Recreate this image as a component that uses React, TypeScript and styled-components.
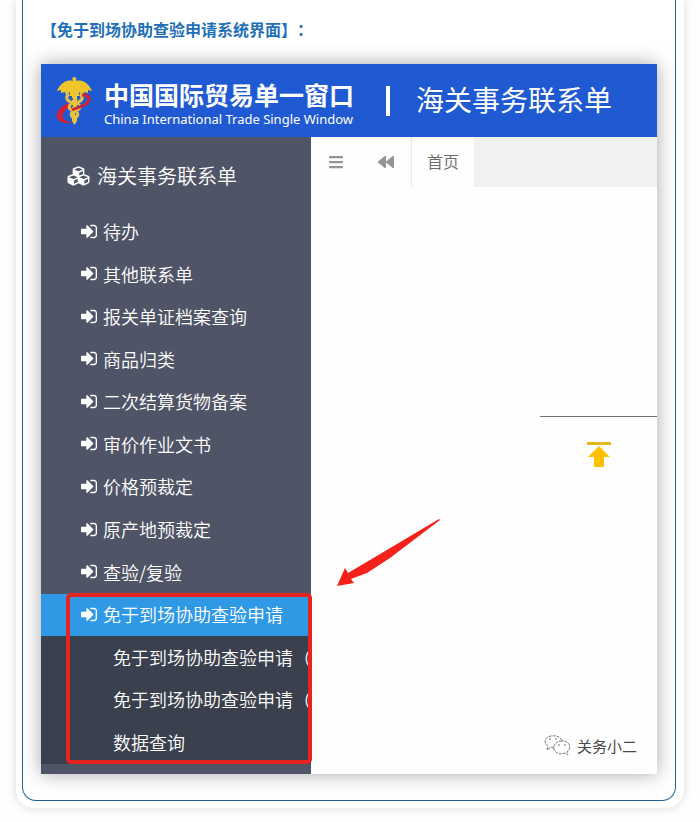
import React from "react";
import styled, { createGlobalStyle } from "styled-components";
import { FaBackward, FaBars, FaCubes } from "react-icons/fa";

const GlobalStyle = createGlobalStyle`
  *, *::before, *::after { box-sizing: border-box; }
  body {
    margin: 0;
    background: #fefefe;
    font-family: "Noto Sans", "Noto Sans CJK SC", sans-serif;
  }
  button { font: inherit; color: inherit; border: 0; background: none; padding: 0; cursor: pointer; }
  ul { list-style: none; margin: 0; padding: 0; }
  h1, h2, p { margin: 0; font-weight: 400; }
`;

const Page = styled.div`
  padding: 0 16px 14px;
  overflow: hidden;
`;

const Card = styled.article`
  padding: 0 8px 7px 6px;
  background: #fff;
  border-radius: 0 0 18px 18px;
  box-shadow: 0 0 10px rgba(0, 0, 0, 0.15);
`;

const Frame = styled.div`
  padding: 15px 18px 26px;
  border: 1px solid #1f6199;
  border-top: 0;
  border-radius: 0 0 14px 14px;
`;

const Caption = styled.h2`
  margin-bottom: 21px;
  font-family: "Noto Sans CJK SC", sans-serif;
  font-size: 16px;
  line-height: 28px;
  font-weight: 700;
  color: #1f70b8;
  text-spacing-trim: space-all;
`;

const Shot = styled.section`
  position: relative;
  background: #fefefe;
  box-shadow: 0 0 18px rgba(0, 0, 0, 0.35);
`;

const Header = styled.header`
  display: flex;
  align-items: center;
  height: 73px;
  padding-left: 14px;
  background: #205ad2;
  color: #fff;
  white-space: nowrap;
`;

const Brand = styled.div`
  margin-left: 10px;
  padding-top: 2px;
`;

const BrandName = styled.h1`
  font-family: "Noto Sans CJK SC", sans-serif;
  font-size: 25px;
  line-height: 34px;
  font-weight: 700;
`;

const BrandSub = styled.p`
  font-size: 13px;
  line-height: 16px;
`;

const Divider = styled.span`
  width: 4px;
  height: 30px;
  margin: 0 26px 0 32px;
  background: #fff;
`;

const SystemName = styled.p`
  font-family: "Noto Sans CJK SC", sans-serif;
  font-size: 28px;
  line-height: 40px;
  padding-bottom: 3px;
`;

const Body = styled.div`
  display: flex;
`;

const Sidebar = styled.nav`
  flex: 0 0 270px;
  padding-bottom: 10px;
  background: #4f5467;
  color: #fff;
  font-family: "Noto Sans CJK SC", sans-serif;
  font-weight: 350;
  overflow: hidden;
`;

const SideTitle = styled.button`
  display: flex;
  align-items: center;
  gap: 7px;
  height: 74px;
  padding: 4px 0 0 26px;
  font-size: 20px;
  line-height: 28px;

  svg { width: 23px; height: 22px; }
`;

const Menu = styled.ul`
  display: grid;
  grid-template-rows: repeat(13, 1fr);
  height: 553px;
`;

const MenuEntry = styled.li<{ $rows?: number }>`
  display: grid;
  grid-row: span ${(p) => p.$rows ?? 1};
  grid-template-rows: subgrid;
`;

const MenuButton = styled.button<{ $active?: boolean }>`
  display: flex;
  align-items: center;
  gap: 6px;
  width: 100%;
  padding: 0 0 2px 40px;
  background: ${(p) => (p.$active ? "#3099e6" : "transparent")};
  font-size: 18px;
  line-height: 26px;
  white-space: nowrap;
`;

const SubMenu = styled.ul`
  display: grid;
  grid-row: span 3;
  grid-template-rows: subgrid;
  background: #3a404d;
`;

const SubButton = styled(MenuButton)`
  height: 100%;
  padding-left: 72px;
`;

const Workspace = styled.main`
  flex: 1;
  min-width: 0;
  display: flex;
  flex-direction: column;
`;

const Tabs = styled.div`
  display: flex;
  height: 50px;
  background: #f0f1f1;
`;

const ToolButton = styled.button`
  display: flex;
  align-items: center;
  justify-content: center;
  width: 50px;
  background: #fefefe;
  color: #929595;

  svg { width: 16px; height: 16px; }
`;

const TabButton = styled.button`
  width: 63px;
  padding: 0 0 2px;
  background: #fefefe;
  border-left: 1px solid #e6e8ec;
  font-family: "Noto Sans CJK SC", sans-serif;
  font-size: 16px;
  font-weight: 350;
  color: #686a6a;
`;

const BackTop = styled.div`
  align-self: flex-end;
  display: flex;
  justify-content: center;
  width: 117px;
  margin-top: 229px;
  padding-top: 25px;
  border-top: 1px solid #707070;
`;

const Watermark = styled.footer`
  align-self: flex-end;
  display: flex;
  align-items: center;
  gap: 6px;
  margin-top: auto;
  padding: 0 20px 16px 0;
  font-size: 15px;
  line-height: 24px;
  color: #4a4a4a;
`;

const Highlight = styled.div`
  position: absolute;
  left: 25px;
  bottom: 10px;
  width: 246px;
  height: 171px;
  border: 4px solid #e5231f;
  border-radius: 5px;
  pointer-events: none;
`;

const Pointer = styled.svg`
  position: absolute;
  left: 296px;
  top: 454px;
  pointer-events: none;
`;

function CustomsEmblem() {
  return (
    <svg width="39" height="50" viewBox="0 0 39 50" aria-hidden="true">
      <path d="M14 27C6 30 1 35 2 41C3 46 10 48 17 47C10 45 6 42 8 38C9 35 12 32 15 31Z" fill="#d51f35" />
      <path d="M19 1C21 1 22 3 21 5C28 3 34 8 37 15L33 14L33 17L29 16L28 19L24 16V20H15V16L11 19L10 16L6 17L6 14L2 15C5 8 11 3 18 5C17 3 17 1 19 1Z" fill="#efc52c" />
      <path d="M17 15H22V45L19.5 49L17 45Z" fill="#efc52c" />
      <path d="M14 18C9 22 13 26 19 27C26 28 27 33 20 35C15 36 15 41 20 42M25 18C30 22 26 26 20 27C13 28 12 33 19 35C24 36 24 41 19 42" fill="none" stroke="#e6c044" strokeWidth="3" />
      <path d="M27 19C34 19 36 23 32 27C28 31 22 31 17 34" fill="none" stroke="#d51f35" strokeWidth="3" />
      <path d="M16 23h2M22 23h2M16 30h2M22 30h2M20 38h1" stroke="#3967a8" strokeWidth="2" />
    </svg>
  );
}

function SignInIcon() {
  return (
    <svg width="16" height="19" viewBox="0 0 1536 1792" fill="currentColor" aria-hidden="true">
      <path d="M1184 896q0 26-19 45l-544 544q-19 19-45 19t-45-19-19-45v-288h-448q-26 0-45-19t-19-45v-384q0-26 19-45t45-19h448v-288q0-26 19-45t45-19 45 19l544 544q19 19 19 45zm352-352v704q0 119-84.500 203.500t-203.500 84.500h-320q-13 0-22.500-9.500t-9.500-22.500q0-4-1-20t-.5-26.500 3-23.500 10-19.500 20.500-6.500h320q66 0 113-47t47-113v-704q0-66-47-113t-113-47h-312l-11.500-1-11.500-3-8-5.500-7-9-2-13.500q0-4-1-20t-.5-26.500 3-23.500 10-19.500 20.500-6.500h320q119 0 203.500 84.500t84.500 203.500z" />
    </svg>
  );
}

function TopIcon() {
  return (
    <svg width="24" height="25" viewBox="0 0 24 25" aria-hidden="true">
      <path d="M0 0H24V3H0Z" fill="#e9b71d" />
      <path d="M12 4L23 15H17V25H7V15H1Z" fill="#ffc000" />
    </svg>
  );
}

function ChatIcon() {
  return (
    <svg width="27" height="22" viewBox="0 0 27 22" fill="none" stroke="#777" strokeWidth="1" strokeDasharray="3 1" aria-hidden="true">
      <path d="M10 13L7 12L3 15L4 11C-1 8 1 2 7 1C12 0 17 2 18 6" />
      <path d="M18 6C12 6 9 10 10 14C11 18 16 20 21 18L24 20L23 17C28 13 26 6 18 6Z" />
      <path d="M5 4h2M11 4h2M14 10h2M20 10h2" />
    </svg>
  );
}

const entries = [
  "待办",
  "其他联系单",
  "报关单证档案查询",
  "商品归类",
  "二次结算货物备案",
  "审价作业文书",
  "价格预裁定",
  "原产地预裁定",
  "查验/复验",
];

const subEntries = ["免于到场协助查验申请（", "免于到场协助查验申请（", "数据查询"];

export default function App() {
  return (
    <>
      <GlobalStyle />
      <Page>
        <Card>
          <Frame>
            <Caption>【免于到场协助查验申请系统界面】：</Caption>
            <Shot>
              <Header>
                <CustomsEmblem />
                <Brand>
                  <BrandName>中国国际贸易单一窗口</BrandName>
                  <BrandSub>China International Trade Single Window</BrandSub>
                </Brand>
                <Divider />
                <SystemName>海关事务联系单</SystemName>
              </Header>
              <Body>
                <Sidebar>
                  <SideTitle><FaCubes />海关事务联系单</SideTitle>
                  <Menu>
                    {entries.map((label) => (
                      <MenuEntry key={label}>
                        <MenuButton><SignInIcon />{label}</MenuButton>
                      </MenuEntry>
                    ))}
                    <MenuEntry $rows={4}>
                      <MenuButton $active aria-expanded="true">
                        <SignInIcon />免于到场协助查验申请
                      </MenuButton>
                      <SubMenu>
                        {subEntries.map((label, i) => (
                          <li key={i}><SubButton>{label}</SubButton></li>
                        ))}
                      </SubMenu>
                    </MenuEntry>
                  </Menu>
                </Sidebar>
                <Workspace>
                  <Tabs>
                    <ToolButton aria-label="菜单"><FaBars /></ToolButton>
                    <ToolButton aria-label="后退"><FaBackward /></ToolButton>
                    <TabButton>首页</TabButton>
                  </Tabs>
                  <BackTop>
                    <button aria-label="返回顶部"><TopIcon /></button>
                  </BackTop>
                  <Watermark><ChatIcon />关务小二</Watermark>
                </Workspace>
              </Body>
              <Highlight />
              <Pointer width="104" height="70" viewBox="0 0 104 70" aria-hidden="true">
                <path d="M0 68L8 50L11 55L33 42L102 1L103 2L53 40L30 55L14 61L17 65Z" fill="#f5211b" />
              </Pointer>
            </Shot>
          </Frame>
        </Card>
      </Page>
    </>
  );
}
